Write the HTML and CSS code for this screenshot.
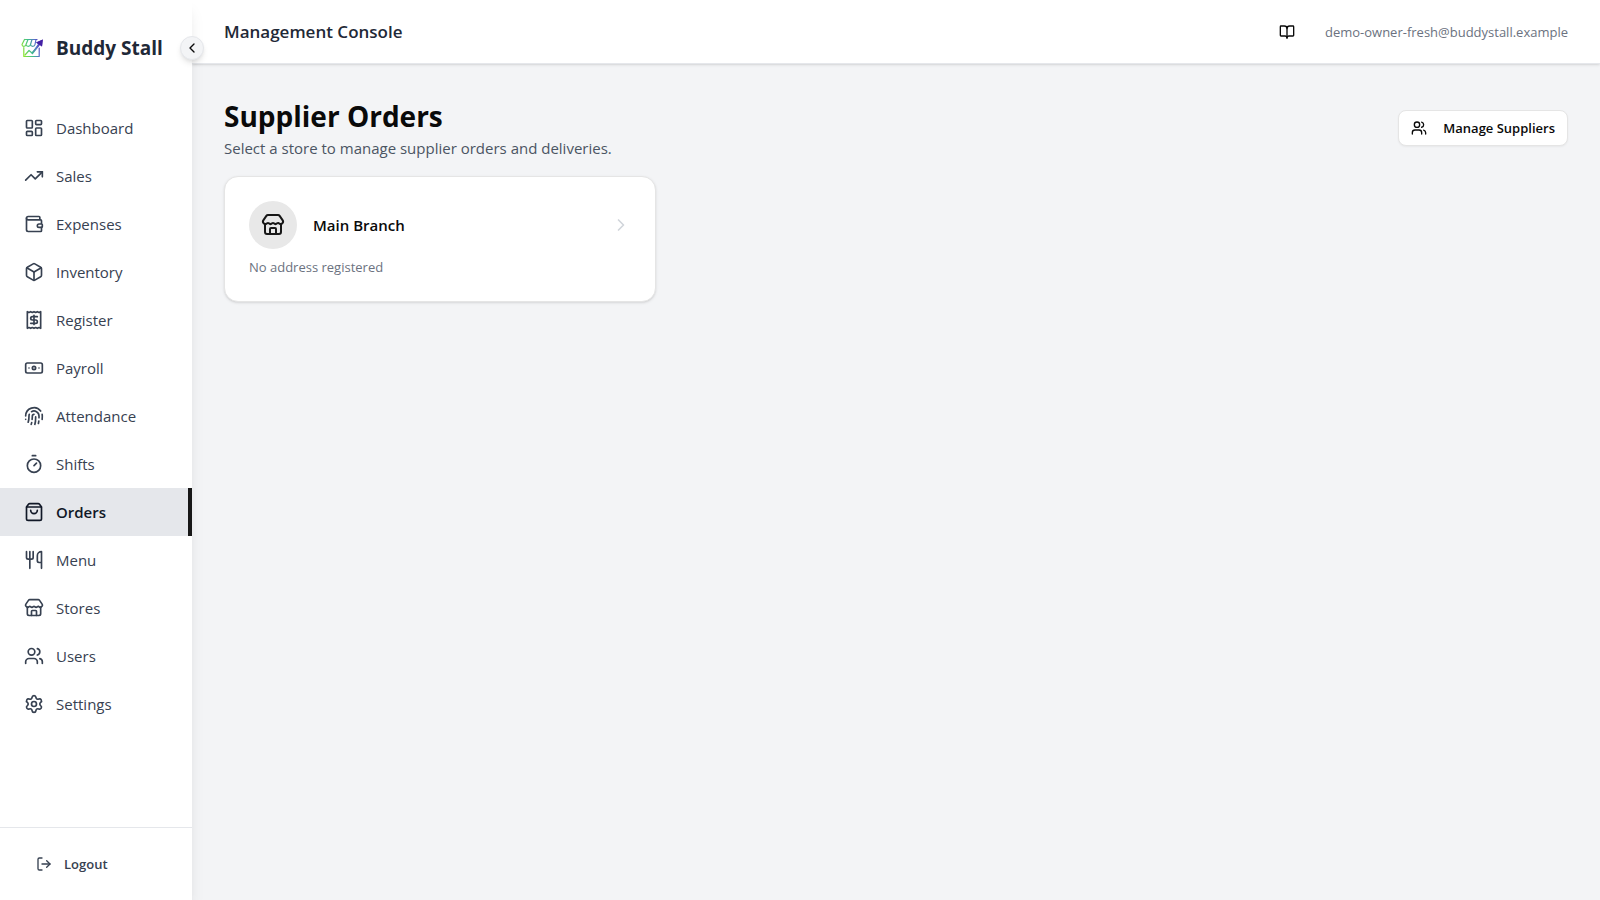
FILE: index.html
```html
<!DOCTYPE html>
<html lang="en">
<head>
<meta charset="utf-8">
<meta name="viewport" content="width=device-width, initial-scale=1">
<title>Supplier Orders</title>
<link rel="stylesheet" href="styles.css">
</head>
<body>
<svg class="sprite" aria-hidden="true">
  <symbol id="store" viewBox="0 0 24 24"><path d="M15 21v-5a1 1 0 0 0-1-1h-4a1 1 0 0 0-1 1v5"/><path d="M17.774 10.31a1.12 1.12 0 0 0-1.549 0 2.5 2.5 0 0 1-3.451 0 1.12 1.12 0 0 0-1.548 0 2.5 2.5 0 0 1-3.452 0 1.12 1.12 0 0 0-1.549 0 2.5 2.5 0 0 1-3.77-3.248l2.889-4.184A2 2 0 0 1 7 2h10a2 2 0 0 1 1.653.873l2.895 4.192a2.5 2.5 0 0 1-3.774 3.244"/><path d="M4 10.95V19a2 2 0 0 0 2 2h12a2 2 0 0 0 2-2v-8.05"/></symbol>
  <symbol id="users" viewBox="0 0 24 24"><path d="M16 21v-2a4 4 0 0 0-4-4H6a4 4 0 0 0-4 4v2"/><path d="M16 3.128a4 4 0 0 1 0 7.744"/><path d="M22 21v-2a4 4 0 0 0-3-3.87"/><circle cx="9" cy="7" r="4"/></symbol>
</svg>
<div class="app">
  <aside class="sidebar">
    <div class="brand">
      <svg class="logo" viewBox="0 0 24 24" aria-hidden="true">
        <defs><linearGradient id="brand" gradientUnits="userSpaceOnUse" x1="2" y1="14" x2="22" y2="8"><stop offset="0" stop-color="#8fe62e"/><stop offset=".4" stop-color="#3fbf8a"/><stop offset=".72" stop-color="#5a6fcb"/><stop offset="1" stop-color="#4a22a8"/></linearGradient></defs>
        <g fill="none" stroke="url(#brand)" stroke-width="1.2" stroke-linejoin="round" stroke-linecap="round">
          <path d="M4.500 3.500H17M4.500 3.500L2 8.500c0 2.500 3.500 2.500 4 0 .5 2.500 4 2.500 4.500 0 .5 2.500 4 2.500 4.500 0M8 3.500l-2 5M12 3.500l-1.500 5M16 3.500l-1 5"/>
          <path d="M3.800 11.500V20.500h15.400V12"/>
          <path d="M5 19l4-4.500 3 2.500 6-7"/>
        </g>
        <path d="M11.500 17.500l6.500-9.500-2-1.500L22.800 3.500l-.8 7-2-1.500-7.500 9.500z" fill="url(#brand)"/>
        <path d="M16 6.500l6.800-3-.8 7z" fill="#4420a5"/>
      </svg>
      <span class="brand-name">Buddy Stall</span>
    </div>
    <button class="collapse" type="button" aria-label="Collapse sidebar"><svg class="icon icon-sm" viewBox="0 0 24 24"><path d="m15 18-6-6 6-6"/></svg></button>
    <nav class="nav" aria-label="Main">
      <a class="nav-item" href="#dashboard"><svg class="icon" viewBox="0 0 24 24"><rect width="7" height="9" x="3" y="3" rx="1"/><rect width="7" height="5" x="14" y="3" rx="1"/><rect width="7" height="9" x="14" y="12" rx="1"/><rect width="7" height="5" x="3" y="16" rx="1"/></svg>Dashboard</a>
      <a class="nav-item" href="#sales"><svg class="icon" viewBox="0 0 24 24"><path d="M16 7h6v6"/><path d="m22 7-8.500 8.500-5-5L2 17"/></svg>Sales</a>
      <a class="nav-item" href="#expenses"><svg class="icon" viewBox="0 0 24 24"><path d="M19 7V4a1 1 0 0 0-1-1H5a2 2 0 0 0 0 4h15a1 1 0 0 1 1 1v4h-3a2 2 0 0 0 0 4h3a1 1 0 0 0 1-1v-2a1 1 0 0 0-1-1"/><path d="M3 5v14a2 2 0 0 0 2 2h15a1 1 0 0 0 1-1v-4"/></svg>Expenses</a>
      <a class="nav-item" href="#inventory"><svg class="icon" viewBox="0 0 24 24"><path d="M21 8a2 2 0 0 0-1-1.730l-7-4a2 2 0 0 0-2 0l-7 4A2 2 0 0 0 3 8v8a2 2 0 0 0 1 1.730l7 4a2 2 0 0 0 2 0l7-4A2 2 0 0 0 21 16Z"/><path d="m3.300 7 8.700 5 8.700-5"/><path d="M12 22V12"/></svg>Inventory</a>
      <a class="nav-item" href="#register"><svg class="icon" viewBox="0 0 24 24"><path d="M4 2v20l2-1 2 1 2-1 2 1 2-1 2 1 2-1 2 1V2l-2 1-2-1-2 1-2-1-2 1-2-1-2 1Z"/><path d="M16 8h-6a2 2 0 1 0 0 4h4a2 2 0 1 1 0 4H8"/><path d="M12 17.500v-11"/></svg>Register</a>
      <a class="nav-item" href="#payroll"><svg class="icon" viewBox="0 0 24 24"><rect width="20" height="12" x="2" y="6" rx="2"/><circle cx="12" cy="12" r="2"/><path d="M6 12h.01M18 12h.01"/></svg>Payroll</a>
      <a class="nav-item" href="#attendance"><svg class="icon" viewBox="0 0 24 24"><path d="M12 10a2 2 0 0 0-2 2c0 1.020-.1 2.510-.26 4"/><path d="M14 13.120c0 2.380 0 6.380-1 8.880"/><path d="M17.290 21.020c.12-.6.430-2.300.5-3.020"/><path d="M2 12a10 10 0 0 1 18-6"/><path d="M2 16h.01"/><path d="M21.800 16c.2-2 .131-5.354 0-6"/><path d="M5 19.500C5.500 18 6 15 6 12a6 6 0 0 1 .34-2"/><path d="M8.650 22c.21-.66.450-1.320.57-2"/><path d="M9 6.800a6 6 0 0 1 9 5.200v2"/></svg>Attendance</a>
      <a class="nav-item" href="#shifts"><svg class="icon" viewBox="0 0 24 24"><path d="M10 2h4"/><path d="m12 14 3-3"/><circle cx="12" cy="14" r="8"/></svg>Shifts</a>
      <a class="nav-item active" href="#orders" aria-current="page"><svg class="icon" viewBox="0 0 24 24"><path d="M16 10a4 4 0 0 1-8 0"/><path d="M3.103 6.034h17.794"/><path d="M3.400 5.467a2 2 0 0 0-.4 1.200V20a2 2 0 0 0 2 2h14a2 2 0 0 0 2-2V6.667a2 2 0 0 0-.4-1.200l-2-2.667A2 2 0 0 0 17 2H7a2 2 0 0 0-1.600.8z"/></svg>Orders</a>
      <a class="nav-item" href="#menu"><svg class="icon" viewBox="0 0 24 24"><path d="M3 2v7c0 1.100.9 2 2 2h4a2 2 0 0 0 2-2V2"/><path d="M7 2v20"/><path d="M21 15V2a5 5 0 0 0-5 5v6c0 1.100.9 2 2 2h3Zm0 0v7"/></svg>Menu</a>
      <a class="nav-item" href="#stores"><svg class="icon"><use href="#store"/></svg>Stores</a>
      <a class="nav-item" href="#users-page"><svg class="icon"><use href="#users"/></svg>Users</a>
      <a class="nav-item" href="#settings"><svg class="icon" viewBox="0 0 24 24"><path d="M9.671 4.136a2.340 2.340 0 0 1 4.659 0 2.340 2.340 0 0 0 3.319 1.915 2.340 2.340 0 0 1 2.330 4.033 2.340 2.340 0 0 0 0 3.831 2.340 2.340 0 0 1-2.330 4.033 2.340 2.340 0 0 0-3.319 1.915 2.340 2.340 0 0 1-4.659 0 2.340 2.340 0 0 0-3.320-1.915 2.340 2.340 0 0 1-2.330-4.033 2.340 2.340 0 0 0 0-3.831A2.340 2.340 0 0 1 6.350 6.051a2.340 2.340 0 0 0 3.319-1.915"/><circle cx="12" cy="12" r="3"/></svg>Settings</a>
    </nav>
    <div class="sidebar-footer">
      <button class="logout" type="button"><svg class="icon icon-sm" viewBox="0 0 24 24"><path d="m16 17 5-5-5-5"/><path d="M21 12H9"/><path d="M9 21H5a2 2 0 0 1-2-2V5a2 2 0 0 1 2-2h4"/></svg>Logout</button>
    </div>
  </aside>
  <div class="content">
    <header class="topbar">
      <div class="topbar-title">Management Console</div>
      <div class="account">
        <button class="guide" type="button" aria-label="Open guide"><svg class="icon icon-sm" viewBox="0 0 24 24"><path d="M12 7v14"/><path d="M3 18a1 1 0 0 1-1-1V4a1 1 0 0 1 1-1h5a4 4 0 0 1 4 4 4 4 0 0 1 4-4h5a1 1 0 0 1 1 1v13a1 1 0 0 1-1 1h-6a3 3 0 0 0-3 3 3 3 0 0 0-3-3z"/></svg></button>
        <span class="email">demo-owner-fresh@buddystall.example</span>
      </div>
    </header>
    <main class="main">
      <div class="page-head">
        <div class="page-heading">
          <h1 class="page-title">Supplier Orders</h1>
          <p class="page-subtitle">Select a store to manage supplier orders and deliveries.</p>
        </div>
        <button class="manage" type="button"><svg class="icon icon-sm"><use href="#users"/></svg>Manage Suppliers</button>
      </div>
      <div class="stores">
        <a class="card" href="#main-branch">
          <span class="card-head">
            <span class="avatar"><svg class="icon icon-lg"><use href="#store"/></svg></span>
            <span class="card-title">Main Branch</span>
            <svg class="icon chevron" viewBox="0 0 24 24"><path d="m9 18 6-6-6-6"/></svg>
          </span>
          <span class="card-text">No address registered</span>
        </a>
      </div>
    </main>
  </div>
</div>
</body>
</html>
```
FILE: styles.css
```css
*, *::before, *::after { box-sizing: border-box; }
body {
  margin: 0;
  font-family: "Segoe UI", "Open Sans", "Noto Sans", sans-serif;
  font-size: 15px;
  line-height: 24px;
  color: #0a0a0a;
  background: #f3f4f6;
}
h1, p { margin: 0; }
a { color: inherit; text-decoration: none; }
button { font: inherit; color: inherit; border: 0; background: none; padding: 0; cursor: pointer; }
.sprite { position: absolute; width: 0; height: 0; }
.icon {
  flex: none;
  width: 20px;
  height: 20px;
  fill: none;
  stroke: currentColor;
  stroke-width: 2;
  stroke-linecap: round;
  stroke-linejoin: round;
}
.icon-sm { width: 16px; height: 16px; }
.icon-lg { width: 24px; height: 24px; }

.app { display: flex; min-height: 100vh; }

.sidebar {
  position: relative;
  z-index: 1;
  flex: none;
  width: 192px;
  display: flex;
  flex-direction: column;
  background: #fff;
  box-shadow: 0 10px 15px -3px rgb(0 0 0 / .1), 0 4px 6px -4px rgb(0 0 0 / .1);
}
.brand { display: flex; align-items: center; gap: 12px; height: 96px; padding: 0 20px; }
.logo { flex: none; width: 24px; height: 24px; }
.brand-name { font-size: 19px; line-height: 28px; font-weight: 700; color: #1f2937; white-space: nowrap; }
.collapse {
  position: absolute;
  top: 36px;
  right: -12px;
  width: 24px;
  height: 24px;
  display: flex;
  align-items: center;
  justify-content: center;
  border: 1px solid #e5e7eb;
  border-radius: 50%;
  background: #f3f4f6;
  box-shadow: 0 4px 6px -1px rgb(0 0 0 / .1), 0 2px 4px -2px rgb(0 0 0 / .1);
}
.nav { flex: 1; padding-top: 8px; }
.nav-item { display: flex; align-items: center; gap: 12px; height: 48px; padding: 0 24px; color: #374151; }
.nav-item.active { background: #e5e7eb; border-right: 4px solid #171717; color: #111827; font-weight: 600; }
.sidebar-footer { padding: 16px; border-top: 1px solid #e5e7eb; }
.logout {
  display: flex;
  align-items: center;
  gap: 12px;
  width: 100%;
  height: 40px;
  padding: 0 20px;
  font-size: 13px;
  font-weight: 600;
  color: #374151;
}

.content { flex: 1; min-width: 0; }
.topbar {
  display: flex;
  align-items: center;
  justify-content: space-between;
  height: 64px;
  padding: 0 32px;
  background: #fff;
  border-bottom: 1px solid #e5e7eb;
  box-shadow: 0 1px 3px rgb(0 0 0 / .1), 0 1px 2px -1px rgb(0 0 0 / .1);
}
.topbar-title { font-size: 17px; font-weight: 600; color: #1f2937; }
.account { display: flex; align-items: center; gap: 20px; }
.guide { display: flex; align-items: center; justify-content: center; width: 36px; height: 36px; }
.email { font-size: 13px; color: #6b7280; }

.main { display: flex; flex-direction: column; gap: 16px; padding: 32px; }
.page-head { display: flex; align-items: center; justify-content: space-between; gap: 16px; }
.page-heading { display: flex; flex-direction: column; }
.page-title { font-size: 28px; line-height: 40px; font-weight: 700; }
.page-subtitle { color: #4b5563; }
.manage {
  display: flex;
  align-items: center;
  gap: 16px;
  height: 36px;
  padding: 0 12px;
  font-size: 13px;
  font-weight: 600;
  white-space: nowrap;
  background: #fff;
  border: 1px solid #e5e5e5;
  border-radius: 8px;
  box-shadow: 0 1px 2px rgb(0 0 0 / .05);
}
.stores { display: grid; grid-template-columns: repeat(3, minmax(0, 1fr)); gap: 24px; }
.card {
  display: flex;
  flex-direction: column;
  gap: 8px;
  padding: 24px;
  background: #fff;
  border: 1px solid #e5e5e5;
  border-radius: 14px;
  box-shadow: 0 1px 3px rgb(0 0 0 / .1), 0 1px 2px -1px rgb(0 0 0 / .1);
}
.card-head { display: flex; align-items: center; gap: 16px; }
.avatar { display: flex; align-items: center; justify-content: center; width: 48px; height: 48px; border-radius: 50%; background: #e8e8e8; color: #171717; }
.card-title { flex: 1; font-weight: 600; }
.chevron { color: #d1d5db; }
.card-text { font-size: 13px; line-height: 20px; color: #6b7280; }
```
